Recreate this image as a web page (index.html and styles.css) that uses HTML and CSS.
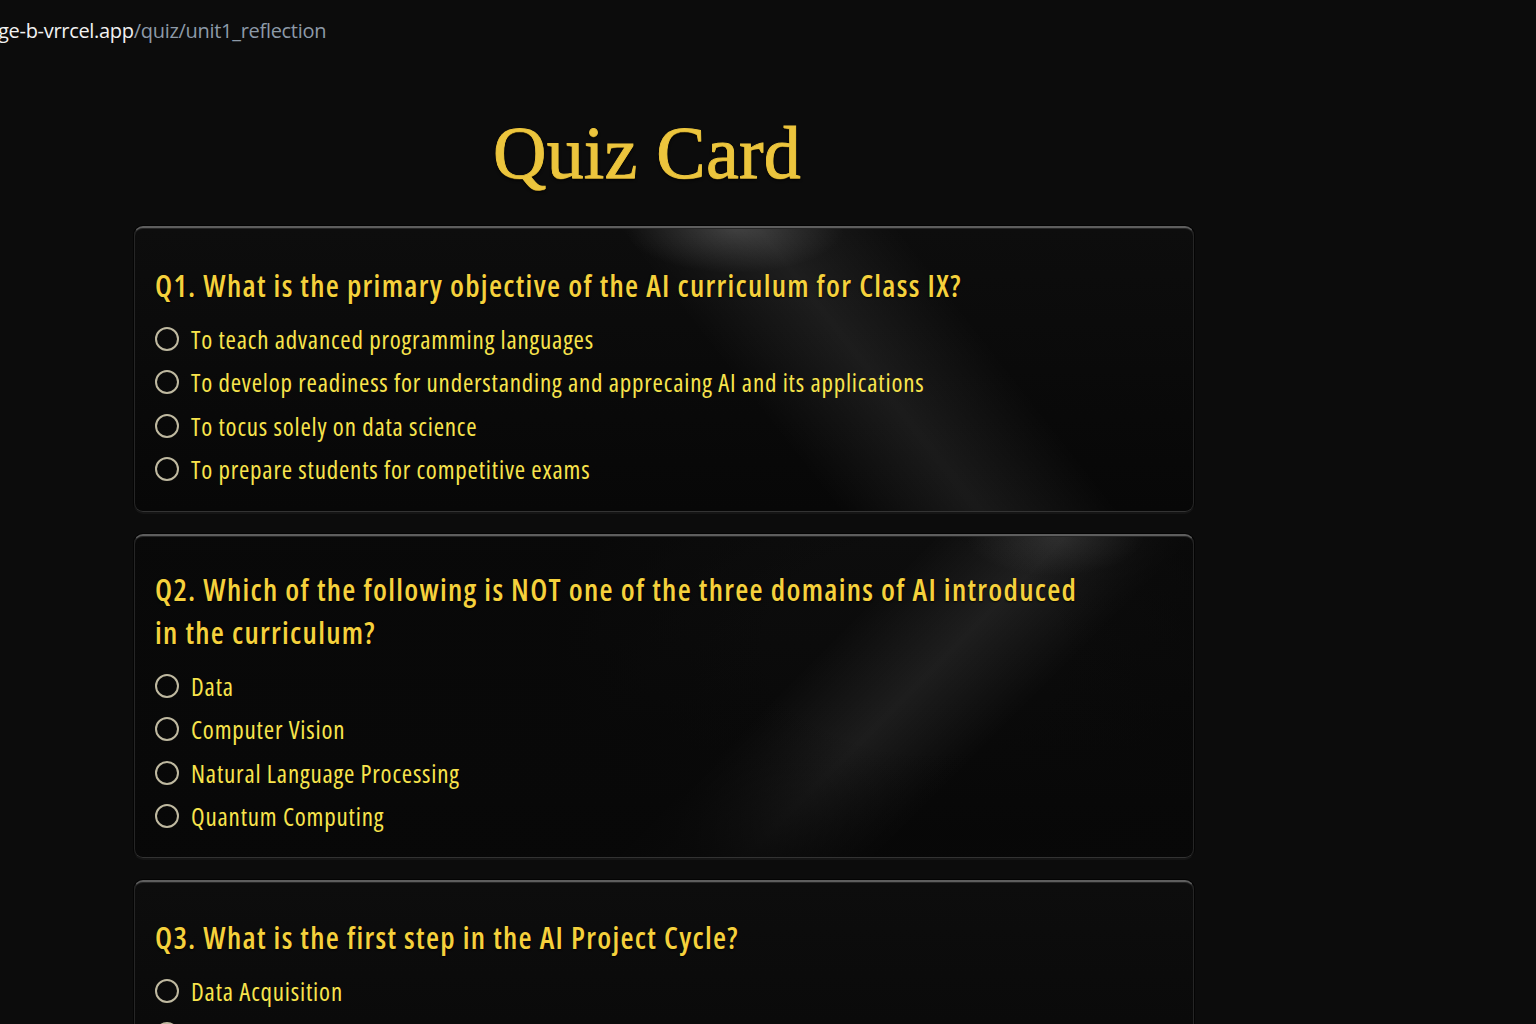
FILE: index.html
```html
<!DOCTYPE html>
<html lang="en">
<head>
<meta charset="utf-8">
<title>Quiz Card</title>
<link rel="stylesheet" href="styles.css">
</head>
<body>
<div class="urlbar"><span class="host">ge-b-vrrcel.app</span><span class="path">/quiz/unit1_reflection</span></div>
<main class="page">
  <h1 class="title">Quiz Card</h1>
  <section class="card card1">
    <h2 class="q">Q1. What is the primary objective of the AI curriculum for Class IX?</h2>
    <ul class="opts">
      <li class="opt"><span class="radio"></span>To teach advanced programming languages</li>
      <li class="opt"><span class="radio"></span>To develop readiness for understanding and apprecaing AI and its applications</li>
      <li class="opt"><span class="radio"></span>To tocus solely on data science</li>
      <li class="opt"><span class="radio"></span>To prepare students for competitive exams</li>
    </ul>
  </section>
  <section class="card card2">
    <h2 class="q">Q2. Which of the following is NOT one of the three domains of AI introduced in the curriculum?</h2>
    <ul class="opts">
      <li class="opt"><span class="radio"></span>Data</li>
      <li class="opt"><span class="radio"></span>Computer Vision</li>
      <li class="opt"><span class="radio"></span>Natural Language Processing</li>
      <li class="opt"><span class="radio"></span>Quantum Computing</li>
    </ul>
  </section>
  <section class="card card3">
    <h2 class="q">Q3. What is the first step in the AI Project Cycle?</h2>
    <ul class="opts">
      <li class="opt"><span class="radio"></span>Data Acquisition</li>
      <li class="opt"><span class="radio"></span>Problem Scoping</li>
      <li class="opt"><span class="radio"></span>Modelling</li>
      <li class="opt"><span class="radio"></span>Evaluation</li>
    </ul>
  </section>
</main>
</body>
</html>
```
FILE: styles.css
```css
html, body {
  margin: 0;
  padding: 0;
  background: #0c0c0c;
  height: 1024px;
  overflow: hidden;
}
body {
  font-family: "Open Sans", "Noto Sans", sans-serif;
}
.urlbar {
  height: 62px;
  padding-top: 17px;
  box-sizing: border-box;
  font-size: 20px;
  line-height: 28px;
  white-space: nowrap;
  margin-left: -2px;
  letter-spacing: -0.3px;
}
.host { color: #f2f2f2; }
.path { color: #8d9aa8; }
.page {
  width: 1060px;
  margin-left: 134px;
}
.title {
  margin: 48px 0 30px 0;
  text-align: center;
  padding-right: 34px;
  font-family: "Liberation Serif", "DejaVu Serif", serif;
  font-weight: normal;
  font-size: 74px;
  line-height: 86px;
  color: #ecc53d;
  letter-spacing: 0.2px;
  -webkit-text-stroke: 0.9px #ecc53d;
  text-shadow: 0 1px 0 #6b5414, 0 2px 3px rgba(0,0,0,0.8);
}
.card {
  position: relative;
  box-sizing: border-box;
  border-radius: 9px;
  border: 1px solid #262626;
  border-top: 2px solid #5e5e5e;
  border-bottom: 1px solid #333;
  background: linear-gradient(180deg, #0d0d0d 0%, #070707 100%);
  box-shadow: 0 2px 0 #151515, 0 0 0 1px #040404, inset 0 1px 0 #262626;
  padding: 36px 20px 20px 20px;
  margin-bottom: 22px;
}
.card1 {
  background:
    radial-gradient(ellipse 110px 45px at 600px 0px, rgba(255,255,255,0.16), rgba(255,255,255,0) 100%),
    linear-gradient(52deg, rgba(255,255,255,0) 55%, rgba(255,255,255,0.075) 66%, rgba(255,255,255,0) 77%),
    linear-gradient(180deg, #0d0d0d 0%, #070707 100%);
}
.card2 {
  padding-top: 32px;
  padding-bottom: 19px;
  background:
    radial-gradient(ellipse 90px 40px at 920px 0px, rgba(255,255,255,0.09), rgba(255,255,255,0) 100%),
    radial-gradient(ellipse 360px 260px at 780px 110px, rgba(12,12,12,0) 40%, rgba(8,8,8,0.85) 100%),
    linear-gradient(135deg, rgba(255,255,255,0) 58%, rgba(255,255,255,0.08) 67.5%, rgba(255,255,255,0) 77%),
    linear-gradient(180deg, #0d0d0d 0%, #070707 100%);
}
.card3 {
  padding-top: 34px;
}
.q {
  margin: 0 0 10px 0;
  max-width: 945px;
  font-weight: 600;
  font-size: 30px;
  font-stretch: condensed;
  letter-spacing: 1.3px;
  line-height: 43px;
  color: #f5d13c;
  text-shadow: 0 1px 2px rgba(0,0,0,0.9);
}
.opts {
  list-style: none;
  margin: 0;
  padding: 0;
}
.opt {
  display: flex;
  align-items: center;
  height: 43.5px;
  font-size: 25px;
  font-stretch: condensed;
  letter-spacing: 0.8px;
  color: #f8e44c;
}
.radio {
  width: 20px;
  height: 20px;
  border: 2px solid #bfb9a0;
  border-radius: 50%;
  margin-right: 12px;
  flex: none;
}
```
